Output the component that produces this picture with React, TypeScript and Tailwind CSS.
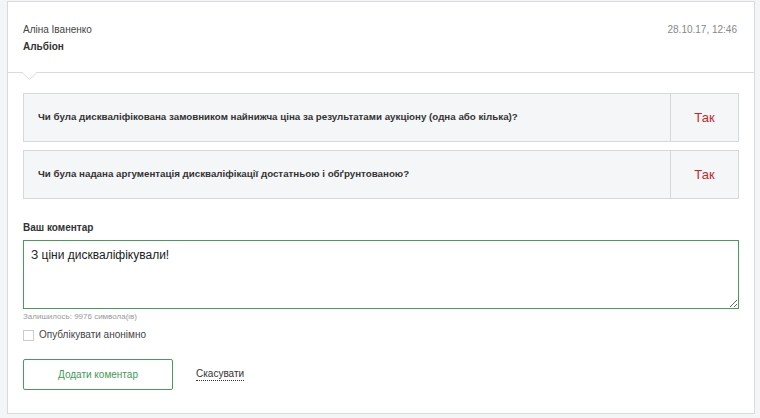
import { useState } from "react";

const questions = [
  "Чи була дискваліфікована замовником найнижча ціна за результатами аукціону (одна або кілька)?",
  "Чи була надана аргументація дискваліфікації достатньою і обґрунтованою?",
];

export default function App() {
  const [text, setText] = useState("З ціни дискваліфікували!");
  const [anon, setAnon] = useState(false);

  return (
    <div className="min-h-[418px] bg-[#f4f5f6] pl-[7px] pr-[5px] pt-px font-['Liberation_Sans',Arial,sans-serif]">
      <div className="border border-[#d9dcdf] bg-white">
        <div className="flex items-start justify-between px-[15px] pt-[21px] pb-[18px]">
          <div>
            <p className="text-[10px] leading-[14px] text-[#444]">Аліна Іваненко</p>
            <p className="mt-[3px] text-[10px] font-bold leading-[14px] text-[#333]">Альбіон</p>
          </div>
          <p className="pr-[2px] text-[10px] leading-[14px] text-[#888]">28.10.17, 12:46</p>
        </div>

        <div className="relative border-t border-[#d9dcdf]">
          <svg className="absolute left-[14px] top-[-1px]" width="16" height="9" viewBox="0 0 16 9">
            <path d="M0 0.5 L7.5 7.5 L15 0.5" fill="#fff" stroke="#d9dcdf" strokeWidth="1" />
            <rect x="1" y="0" width="13" height="1" fill="#fff" />
          </svg>
        </div>

        <div className="px-[15px] pt-[20px] pb-[23px]">
          <div className="flex flex-col gap-[8px]">
            {questions.map((q) => (
              <div key={q} className="flex h-[49px] border border-[#d6d9dc] bg-[#f5f6f7]">
                <div className="flex flex-1 items-center pl-[14px] text-[9.75px] font-bold text-[#333]">{q}</div>
                <div className="flex w-[68px] items-center justify-center border-l border-[#d6d9dc] text-[13px] text-[#c62828]">
                  Так
                </div>
              </div>
            ))}
          </div>

          <p className="mt-[22px] text-[10px] font-bold leading-[14px] text-[#333]">Ваш коментар</p>
          <textarea
            value={text}
            onChange={(e) => setText(e.target.value)}
            className="mt-[5px] block h-[69px] w-full border border-[#4c9a5e] px-[7px] py-[6px] text-[12px] leading-[16px] text-[#222] outline-none"
          />
          <p className="mt-[2px] text-[8px] leading-[12px] text-[#999]">Залишилось: {10000 - text.length} символа(ів)</p>

          <label className="mt-[5px] flex items-center gap-[5px]">
            <input
              type="checkbox"
              checked={anon}
              onChange={(e) => setAnon(e.target.checked)}
              className="h-[11px] w-[11px] appearance-none border border-[#ccc] bg-white"
            />
            <span className="text-[10px] leading-[14px] text-[#444]">Опублікувати анонімно</span>
          </label>

          <div className="mt-[17px] flex items-center gap-[23px]">
            <button className="h-[31px] w-[150px] rounded-[2px] border border-[#4c9a5e] bg-white text-[10px] text-[#3f9a55]">
              Додати коментар
            </button>
            <button className="border-b border-dotted border-[#333] text-[10px] leading-[12px] text-[#333]">Скасувати</button>
          </div>
        </div>
      </div>
    </div>
  );
}
